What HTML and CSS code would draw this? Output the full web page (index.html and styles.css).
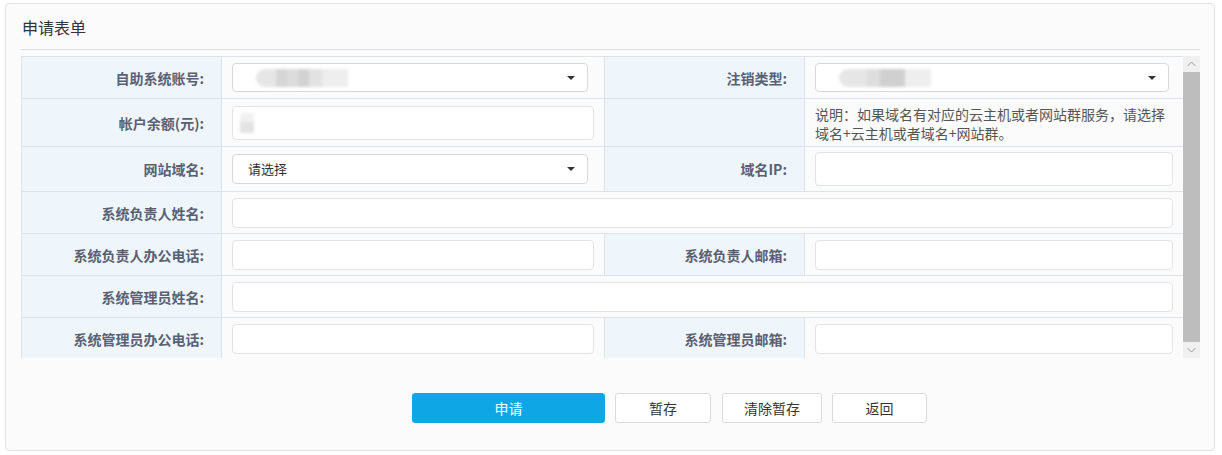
FILE: index.html
```html
<!DOCTYPE html>
<html lang="zh-CN">
<head>
    <meta charset="UTF-8">
    <title>申请表单</title>
    <link rel="stylesheet" href="styles.css">
</head>
<body>

    <div class="panel">
        <div class="panel-title">申请表单</div>

        <div class="form-scroll">
            <div class="form-view">
                <div class="form-grid">
                    <!-- row 1 -->
                    <div class="cell label">自助系统账号:</div>
                    <div class="cell field">
                        <div class="select select-left"><span class="mask mask-account"></span><i class="caret"></i></div>
                    </div>
                    <div class="cell label">注销类型:</div>
                    <div class="cell field">
                        <div class="select select-right"><span class="mask mask-type"></span><i class="caret"></i></div>
                    </div>

                    <!-- row 2 -->
                    <div class="cell label">帐户余额(元):</div>
                    <div class="cell field">
                        <div class="input input-tall"><span class="mask mask-balance"></span></div>
                    </div>
                    <div class="cell label"></div>
                    <div class="cell note">说明：如果域名有对应的云主机或者网站群服务，请选择域名+云主机或者域名+网站群。</div>

                    <!-- row 3 -->
                    <div class="cell label">网站域名:</div>
                    <div class="cell field">
                        <div class="select select-left select-tall"><span class="placeholder">请选择</span><i class="caret"></i></div>
                    </div>
                    <div class="cell label">域名IP:</div>
                    <div class="cell field">
                        <div class="input input-tall"></div>
                    </div>

                    <!-- row 4 -->
                    <div class="cell label">系统负责人姓名:</div>
                    <div class="cell field wide">
                        <div class="input"></div>
                    </div>

                    <!-- row 5 -->
                    <div class="cell label">系统负责人办公电话:</div>
                    <div class="cell field">
                        <div class="input"></div>
                    </div>
                    <div class="cell label">系统负责人邮箱:</div>
                    <div class="cell field">
                        <div class="input"></div>
                    </div>

                    <!-- row 6 -->
                    <div class="cell label">系统管理员姓名:</div>
                    <div class="cell field wide">
                        <div class="input"></div>
                    </div>

                    <!-- row 7 -->
                    <div class="cell label">系统管理员办公电话:</div>
                    <div class="cell field">
                        <div class="input"></div>
                    </div>
                    <div class="cell label">系统管理员邮箱:</div>
                    <div class="cell field">
                        <div class="input"></div>
                    </div>
                </div>
            </div>

            <div class="scrollbar">
                <div class="sb-btn">
                    <svg width="9" height="6" viewBox="0 0 9 6"><path d="M0.5 5 L4.5 1 L8.5 5" fill="none" stroke="#9a9a9a" stroke-width="1"/></svg>
                </div>
                <div class="sb-thumb"></div>
                <div class="sb-btn">
                    <svg width="9" height="6" viewBox="0 0 9 6"><path d="M0.5 1 L4.5 5 L8.5 1" fill="none" stroke="#9a9a9a" stroke-width="1"/></svg>
                </div>
            </div>
        </div>

        <div class="actions">
            <button class="btn btn-primary">申请</button>
            <button class="btn btn-save">暂存</button>
            <button class="btn btn-clear">清除暂存</button>
            <button class="btn btn-back">返回</button>
        </div>
    </div>

</body>
</html>
```

FILE: styles.css
```css
body {
    margin: 0;
    background: #ffffff;
    font-family: "Noto Sans CJK SC", "Noto Sans", sans-serif;
    font-size: 14px;
    color: #333;
}
.panel {
    margin: 3px 7px 0 5px;
    height: 446px;
    padding: 0 14px 0 15px;
    border: 1px solid #e1e1e1;
    border-radius: 4px;
    background: #fbfbfb;
}
.panel-title {
    height: 45px;
    line-height: 47px;
    padding-left: 1px;
    font-size: 16px;
    color: #333;
    border-bottom: 1px solid #dedede;
    margin-bottom: 6px;
}

/* table + fake scrollbar */
.form-scroll {
    display: flex;
    height: 302px;
}
.form-view {
    width: 1162px;
    overflow: hidden;
}
.form-grid {
    display: grid;
    grid-template-columns: 200px 383px 200px 379px;
    grid-template-rows: 42px 48px 45px 42px 42px 42px 42px;
    border-top: 1px solid #dde3e8;
    border-left: 1px solid #dde3e8;
}
.cell {
    box-sizing: border-box;
    border-right: 1px solid #dde3e8;
    border-bottom: 1px solid #dde3e8;
    display: flex;
    align-items: center;
}
.label {
    justify-content: flex-end;
    padding-right: 17px;
    background: #eef6fb;
    font-weight: bold;
    color: #596072;
    line-height: 20px;
}
.field {
    padding: 0 10px;
    background: #fbfbfb;
}
.wide {
    grid-column: span 3;
}
.note {
    padding: 2px 12px 0 10px;
    line-height: 19px;
    color: #555;
    background: #fbfbfb;
}

.input,
.select {
    box-sizing: border-box;
    height: 30px;
    width: 100%;
    border: 1px solid #e3e3e3;
    border-radius: 4px;
    background: #fff;
    display: flex;
    align-items: center;
    position: relative;
}
.input-tall {
    height: 34px;
}
.select {
    height: 29px;
    border-color: #d8d8d8;
    padding-left: 15px;
}
.select-tall {
    height: 30px;
}
.select-left {
    width: 356px;
}
.select-right {
    width: 354px;
}
.placeholder {
    font-size: 13px;
    color: #333;
    line-height: 18px;
}
.caret {
    position: absolute;
    right: 12px;
    top: 12px;
    width: 0;
    height: 0;
    border-left: 4px solid transparent;
    border-right: 4px solid transparent;
    border-top: 4px solid #333;
}

/* blurred personal data */
.mask {
    display: block;
    height: 18px;
    filter: blur(1.5px);
}
.mask-account {
    width: 92px;
    margin-left: 8px;
    border-radius: 9px 0 0 9px;
    background: linear-gradient(90deg, #e6e6e6 0 22%, #d6d6d6 22% 34%, #dcdcdc 34% 46%, #d2d2d2 46% 58%, #e2e2e2 58% 72%, #eeeeee 72% 100%);
}
.mask-type {
    width: 92px;
    margin-left: 8px;
    border-radius: 9px 0 0 9px;
    background: linear-gradient(90deg, #e6e6e6 0 30%, #dedede 30% 45%, #d0d0d0 45% 72%, #eeeeee 72% 100%);
}
.mask-balance {
    width: 14px;
    height: 20px;
    margin-left: 7px;
    background: linear-gradient(180deg, #f1f1f1 0 45%, #e3e3e3 45% 100%);
}

.scrollbar {
    width: 17px;
    display: flex;
    flex-direction: column;
    background: #f1f1f1;
}
.sb-btn {
    height: 16px;
    display: flex;
    align-items: center;
    justify-content: center;
    background: #f0f0f0;
}
.sb-thumb {
    flex: 1;
    background: #bdbdbd;
}

.actions {
    display: flex;
    gap: 10px;
    padding-left: 391px;
    margin-top: 35px;
}
.btn {
    height: 30px;
    border: 1px solid #dadada;
    border-radius: 3px;
    background: #fff;
    color: #333;
    font-family: "Noto Sans CJK SC", "Noto Sans", sans-serif;
    font-size: 14px;
    padding: 0;
    cursor: pointer;
}
.btn-primary {
    width: 193px;
    background: #0fa6e6;
    border-color: #0fa6e6;
    color: #fff;
}
.btn-save {
    width: 96px;
}
.btn-clear {
    width: 100px;
    margin-left: 1px;
}
.btn-back {
    width: 95px;
}
```
